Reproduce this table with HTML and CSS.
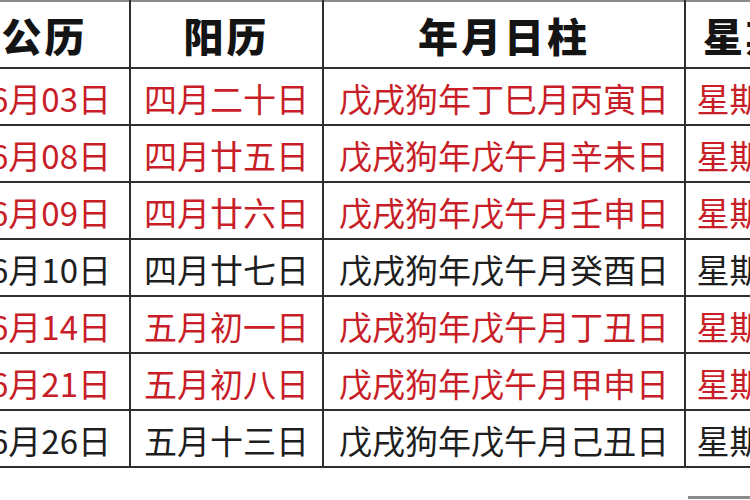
FILE: index.html
```html
<!DOCTYPE html>
<html lang="zh-CN">
<head>
<meta charset="utf-8">
<link rel="stylesheet" href="styles.css">
</head>
<body>
<div class="page">
<table class="cal">
  <colgroup>
    <col class="c1"><col class="c2"><col class="c3"><col class="c4">
  </colgroup>
  <thead>
    <tr><th>公历</th><th>阳历</th><th>年月日柱</th><th>星期</th></tr>
  </thead>
  <tbody>
    <tr class="red"><td>6月03日</td><td>四月二十日</td><td>戊戌狗年丁巳月丙寅日</td><td>星期日</td></tr>
    <tr class="red"><td>6月08日</td><td>四月廿五日</td><td>戊戌狗年戊午月辛未日</td><td>星期五</td></tr>
    <tr class="red"><td>6月09日</td><td>四月廿六日</td><td>戊戌狗年戊午月壬申日</td><td>星期六</td></tr>
    <tr class="black"><td>6月10日</td><td>四月廿七日</td><td>戊戌狗年戊午月癸酉日</td><td>星期日</td></tr>
    <tr class="red"><td>6月14日</td><td>五月初一日</td><td>戊戌狗年戊午月丁丑日</td><td>星期四</td></tr>
    <tr class="red"><td>6月21日</td><td>五月初八日</td><td>戊戌狗年戊午月甲申日</td><td>星期四</td></tr>
    <tr class="black"><td>6月26日</td><td>五月十三日</td><td>戊戌狗年戊午月己丑日</td><td>星期二</td></tr>
  </tbody>
</table>
<div class="edge"></div>
</div>
</body>
</html>
```
FILE: styles.css
```css
html, body {
  margin: 0;
  padding: 0;
  background: #ffffff;
  overflow: hidden;
}
.page {
  width: 750px;
  height: 500px;
  overflow: hidden;
}
.cal {
  border-collapse: collapse;
  table-layout: fixed;
  width: 836px;
  margin-left: -30px;
  font-family: "Noto Sans CJK SC", "Noto Sans", sans-serif;
}
.c1 { width: 159px; }
.c2 { width: 193px; }
.c3 { width: 362px; }
.c4 { width: 122px; }
.cal th, .cal td {
  border: 2px solid #2f2f2f;
  padding: 0;
  text-align: center;
  white-space: nowrap;
  overflow: hidden;
}
.cal thead tr { height: 67px; }
.cal tbody tr { height: 57px; }
.cal thead th {
  border-top-color: #8a8a8a;
  font-size: 40px;
  font-weight: 900;
  letter-spacing: 3px;
  color: #141414;
  line-height: 1;
}
.cal thead th:first-child {
  padding-right: 12px;
}
.cal td {
  font-size: 33px;
  line-height: 1;
  letter-spacing: 0;
  padding-top: 4px;
}
.red td { color: #c81e28; }
.black td { color: #1e1e1e; }
.edge {
  margin-top: 28px;
  margin-left: 688px;
  width: 62px;
  height: 3px;
  background: #8c8c8c;
}
```
